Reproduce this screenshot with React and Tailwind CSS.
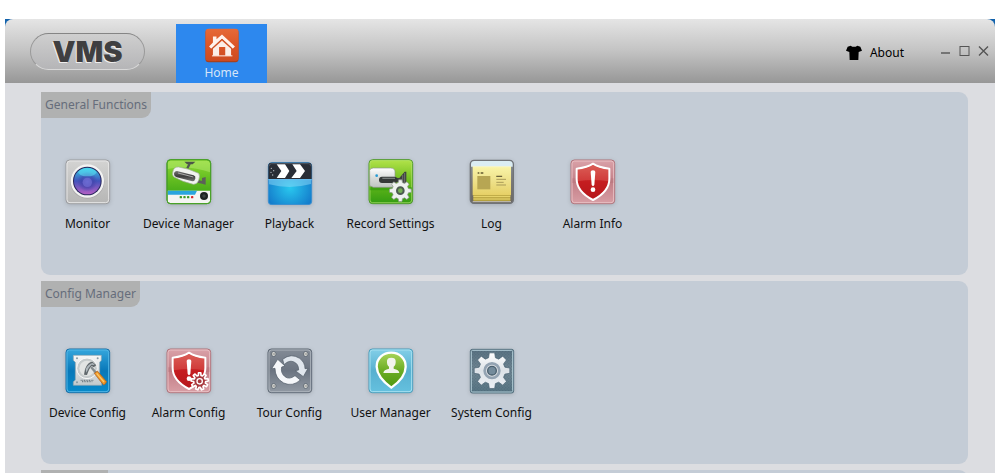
import { useState } from 'react'

// outline of a cog: every tooth is a small trapezoid between the two radii
function gearPath(cx, cy, teeth, outer, inner) {
  const step = (Math.PI * 2) / teeth
  const points = []
  for (let i = 0; i < teeth; i++) {
    const a = i * step - Math.PI / 2
    ;[[-0.33, inner], [-0.19, outer], [0.19, outer], [0.33, inner]].forEach(([k, r]) => {
      points.push(`${(cx + r * Math.cos(a + k * step)).toFixed(1)} ${(cy + r * Math.sin(a + k * step)).toFixed(1)}`)
    })
  }
  return `M${points.join('L')}Z`
}

const SHIELD = 'M69 14C57 23 41 27 20 29V60C20 87 40 108 69 123C98 108 118 87 118 60V29C97 27 81 23 69 14Z'

function Icon({ children }) {
  return (
    <svg viewBox="0 0 138 138" className="w-[46px] h-[46px] drop-shadow-sm" aria-hidden="true">
      {children}
    </svg>
  )
}

function Fade({ id, from, mid, to }) {
  return (
    <linearGradient id={id} x1="0" y1="0" x2="0" y2="1">
      <stop offset="0" stopColor={from} />
      <stop offset="0.5" stopColor={mid} />
      <stop offset="1" stopColor={to} />
    </linearGradient>
  )
}

function MonitorIcon() {
  return (
    <Icon>
      <defs>
        <Fade id="monBox" from="#d4d4d3" mid="#c4c4c3" to="#b6b6b5" />
        <Fade id="monLens" from="#35cfe8" mid="#4353bb" to="#b45fc4" />
        <radialGradient id="monCore">
          <stop offset="0" stopColor="#5b62d0" />
          <stop offset="0.6" stopColor="#4040a8" stopOpacity="0.6" />
          <stop offset="1" stopColor="#4040a8" stopOpacity="0" />
        </radialGradient>
      </defs>
      <rect x="3" y="3" width="131" height="131" rx="11" fill="url(#monBox)" stroke="#9b9c9f" strokeWidth="3" />
      <rect x="6" y="6" width="125" height="125" rx="9" fill="none" stroke="#e6e6e6" strokeWidth="3" />
      <circle cx="67" cy="68" r="51" fill="#aaa9aa" />
      <circle cx="67" cy="66" r="50" fill="#f3f3f2" />
      <circle cx="67" cy="66" r="43" fill="#27265c" />
      <circle cx="67" cy="66" r="40" fill="url(#monLens)" />
      <circle cx="67" cy="68" r="30" fill="url(#monCore)" />
      <circle cx="67" cy="70" r="14" fill="#7671d6" opacity="0.6" />
      <ellipse cx="67" cy="40" rx="27" ry="12" fill="#5de0f2" opacity="0.55" />
    </Icon>
  )
}

function DeviceManagerIcon() {
  return (
    <Icon>
      <defs>
        <Fade id="devBox" from="#8fdb33" mid="#5fba1f" to="#2f9d12" />
        <Fade id="devLens" from="#777" mid="#3c3c3c" to="#777" />
      </defs>
      <rect x="3" y="2" width="131" height="132" rx="11" fill="url(#devBox)" stroke="#3f8a22" strokeWidth="3" />
      <path d="M5 30Q70 18 132 40V12Q130 5 122 5H14Q6 5 5 14Z" fill="#c5f184" opacity="0.4" />
      <path d="M5 95H132V124Q132 132 124 132H13Q5 132 5 124Z" fill="#f4f4f2" />
      <path d="M5 95H93L87 107H5Z" fill="#2aa5de" />
      <path d="M55 8H88L80 16H63Z" fill="#4c5648" />
      <path d="M71 14L64 28" stroke="#505850" strokeWidth="7" />
      <path d="M95 62L108 66V57L119 54V77L108 74L94 71Z" fill="#5c6159" />
      <path d="M38 24Q24 23 21 36Q17 50 24 54Q52 70 82 76Q93 77 98 64Q103 50 98 43Q68 28 38 24Z" fill="#f1f3f0" stroke="#a3ad9c" strokeWidth="2" />
      <path d="M33 36Q24 37 24 45Q24 53 32 55L79 67Q86 67 88 59Q90 52 83 49Z" fill="url(#devLens)" />
      <path d="M36 42L82 54" stroke="#aaa" strokeWidth="3" />
      <circle cx="114" cy="111" r="12" fill="#1e2322" />
      <circle cx="114" cy="111" r="5" fill="#3b4241" />
      <g fill="#3f9c28">
        <rect x="41" y="111" width="7" height="7" rx="2" />
        <rect x="52" y="111" width="7" height="7" rx="2" />
        <rect x="63" y="111" width="7" height="7" rx="2" />
      </g>
      <rect x="75" y="111" width="7" height="7" rx="2" fill="#d5282a" />
      <rect x="3" y="2" width="131" height="132" rx="11" fill="none" stroke="#4ba52a" strokeWidth="3" />
    </Icon>
  )
}

function PlaybackIcon() {
  return (
    <Icon>
      <defs>
        <radialGradient id="playBlue" cx="0.5" cy="0.6" r="0.6">
          <stop offset="0" stopColor="#29c7ee" />
          <stop offset="1" stopColor="#1379ca" />
        </radialGradient>
      </defs>
      <rect x="4" y="11" width="130" height="126" rx="10" fill="url(#playBlue)" stroke="#3b8fd0" strokeWidth="3" />
      <path d="M4 60V20Q4 11 13 11H125Q134 11 134 20V60Z" fill="#292d36" />
      <path d="M6 60H132V75Q70 92 6 76Z" fill="#8fd9f8" opacity="0.5" />
      <path d="M4 62H134" stroke="#6abcf0" strokeWidth="3" />
      <path d="M29 16H54L67 36L54 57H29L43 36Z" fill="#fff" />
      <path d="M76 16H99L114 36L99 57H73L89 36Z" fill="#fff" />
      <g fill="#b9bec6">
        <circle cx="13" cy="28" r="2" />
        <circle cx="20" cy="35" r="2" />
        <circle cx="12" cy="40" r="2" />
        <circle cx="17" cy="48" r="2" />
      </g>
      <path d="M6 22Q7 14 14 14H124Q132 14 132 22" fill="none" stroke="#626a77" strokeWidth="2" />
    </Icon>
  )
}

function RecordIcon() {
  return (
    <Icon>
      <defs>
        <Fade id="recBox" from="#b3e34a" mid="#6abb1b" to="#329b12" />
        <Fade id="recCam" from="#fff" mid="#d9dcda" to="#bfc4c2" />
      </defs>
      <rect x="3" y="2" width="131" height="132" rx="11" fill="url(#recBox)" stroke="#4f9a2a" strokeWidth="3" />
      <rect x="6" y="5" width="125" height="126" rx="8" fill="none" stroke="#b2e26f" strokeWidth="2" />
      <path d="M5 94H132V85H5Z" fill="#249209" opacity="0.5" />
      <path d="M80 56L94 57L110 38H115V78H107L94 70H80Z" fill="#3d413e" />
      <path d="M110 42V76M104 48V71" stroke="#868b87" strokeWidth="2" />
      <path d="M5 34Q7 27 16 27H68Q81 28 81 38V75Q80 85 70 85H16L5 80Z" fill="url(#recCam)" stroke="#8b948b" strokeWidth="2" />
      <rect x="33" y="53" width="55" height="19" rx="9" fill="#343838" />
      <path d="M43 58H81" stroke="#777d7b" strokeWidth="4" />
      <circle cx="26" cy="50" r="4" fill="#289bd4" />
      <path d={gearPath(97, 95, 8, 33, 25)} fill="#eef1ef" stroke="#899489" strokeWidth="2" strokeLinejoin="round" />
      <circle cx="97" cy="95" r="10" fill="#74ae55" stroke="#4c5b50" strokeWidth="6" />
    </Icon>
  )
}

function LogIcon() {
  return (
    <Icon>
      <defs>
        <Fade id="logPaper" from="#f9f4a7" mid="#eee18a" to="#e6d065" />
        <Fade id="logBox" from="#8a959b" mid="#7a7876" to="#6b6761" />
      </defs>
      <rect x="4" y="4" width="129" height="129" rx="11" fill="url(#logBox)" stroke="#707378" strokeWidth="4" />
      <path d="M6 23V15Q7 6 16 6H121Q130 6 131 15V23Z" fill="#dbedf3" />
      <path d="M13 32V126H124V32" fill="#b5a13e" />
      <path d="M13 113H124M13 120H124" stroke="#f0dd75" strokeWidth="3" />
      <path d="M11 23H126V109H11Z" fill="url(#logPaper)" />
      <path d="M11 23H126" stroke="#f9f7cc" strokeWidth="3" />
      <path d="M11 128H126" stroke="#c9c4b7" strokeWidth="3" />
      <rect x="25" y="51" width="39" height="40" fill="#b7a653" />
      <path d="M26 42H31M35 42H43" stroke="#625a30" strokeWidth="5" />
      <path d="M82 52H100M82 61H111M82 70H104M82 78H111" stroke="#a99b58" strokeWidth="3" />
      <path d="M82 52H99" stroke="#5a5535" strokeWidth="3" />
    </Icon>
  )
}

function ShieldBase({ id }) {
  return (
    <>
      <defs>
        <Fade id={`${id}Box`} from="#daa2a9" mid="#c27e86" to="#d89ea5" />
        <Fade id={`${id}Red`} from="#d5524c" mid="#c51d20" to="#b6161b" />
      </defs>
      <rect x="3" y="3" width="131" height="131" rx="10" fill={`url(#${id}Box)`} stroke="#ae7179" strokeWidth="3" />
      <rect x="6" y="6" width="125" height="125" rx="8" fill="none" stroke="#e8bfc3" strokeWidth="3" />
      <path d="M6 72H131V58H6Z" fill="#b16d75" opacity="0.3" />
      <path d={SHIELD} fill={`url(#${id}Red)`} stroke="#fff" strokeWidth="6" strokeLinejoin="round" />
      <path d="M24 67Q70 59 114 67V32Q88 30 69 19Q50 30 24 32Z" fill="#ef8b80" opacity="0.25" />
      <path d="M62 39Q62 34 69 34Q76 34 76 39L73 78Q69 85 65 78Z" fill="#fff" />
      <circle cx="69" cy="92" r="7" fill="#fff" />
    </>
  )
}

function AlarmInfoIcon() {
  return (
    <Icon>
      <ShieldBase id="alarmInfo" />
    </Icon>
  )
}

function AlarmConfigIcon() {
  return (
    <Icon>
      <ShieldBase id="alarmCfg" />
      <path d={gearPath(101, 100, 9, 26, 18)} fill="#a8393e" stroke="#fff" strokeWidth="5" strokeLinejoin="round" />
      <circle cx="101" cy="100" r="8" fill="#a8393e" stroke="#fff" strokeWidth="4" />
    </Icon>
  )
}

function DeviceConfigIcon() {
  return (
    <Icon>
      <defs>
        <Fade id="dcBox" from="#36a7dd" mid="#0878b9" to="#078aca" />
        <Fade id="dcDisk" from="#f6f7f7" mid="#dadddf" to="#c2c9cc" />
      </defs>
      <rect x="3" y="3" width="131" height="131" rx="10" fill="url(#dcBox)" stroke="#176ca5" strokeWidth="3" />
      <rect x="6" y="6" width="125" height="125" rx="8" fill="none" stroke="#52b6e5" strokeWidth="3" />
      <path d="M25 22H109V37L104 43V96L110 101V112H25V101L31 96V43L25 37Z" fill="url(#dcDisk)" stroke="#8ea4af" strokeWidth="2" />
      <circle cx="66" cy="61" r="31" fill="#c6cbcc" stroke="#f9f9f9" strokeWidth="3" />
      <circle cx="66" cy="61" r="23" fill="#e2e4e3" />
      <path d="M47 97H86M51 101H82" stroke="#758087" strokeWidth="4" strokeDasharray="3 2" />
      <path d="M60 64Q68 41 82 41L94 52L86 58L80 54Q73 60 66 81L57 80Z" fill="#60676b" />
      <path d="M62 63Q71 46 84 45L89 51L79 50Q70 58 64 74Z" fill="#aeb7bc" />
      <path d="M78 57L96 78" stroke="#848c8f" strokeWidth="7" />
      <path d="M88 76L97 69L124 100Q125 107 116 111Q111 106 88 76Z" fill="#eb9327" stroke="#a95a15" strokeWidth="2" />
      <path d="M95 76L117 102" stroke="#ffcb65" strokeWidth="4" />
      <g fill="#8799a3">
        <circle cx="36" cy="31" r="3" />
        <circle cx="98" cy="31" r="3" />
        <circle cx="36" cy="103" r="3" />
      </g>
    </Icon>
  )
}

function TourIcon() {
  return (
    <Icon>
      <defs>
        <Fade id="tourBox" from="#838b96" mid="#6b7481" to="#929aa4" />
      </defs>
      <rect x="3" y="3" width="131" height="131" rx="10" fill="url(#tourBox)" stroke="#5c6773" strokeWidth="3" />
      <rect x="6" y="6" width="125" height="125" rx="8" fill="none" stroke="#adb4bc" strokeWidth="3" />
      {[[20, 18], [116, 18], [20, 114], [116, 114]].map(([x, y]) => (
        <g key={`${x}-${y}`}>
          <circle cx={x} cy={y} r="7" fill="#e5e5e1" stroke="#4d5862" strokeWidth="2" />
          <path d={`M${x - 4} ${y}H${x + 4}`} stroke="#7b7d7b" strokeWidth="3" />
        </g>
      ))}
      <g stroke="#4e5965" strokeWidth="2" strokeLinejoin="round">
        <path d="M47 34Q72 14 98 31Q114 43 114 62L123 61L109 86L85 68L95 66Q95 47 79 41Q65 36 51 50Z" fill="#e0e6ed" />
        <path d="M14 62L32 34L54 54L44 57Q40 75 54 86Q67 96 84 83L100 96Q77 117 50 105Q24 91 24 61Z" fill="#f5f7fa" />
      </g>
    </Icon>
  )
}

function UserIcon() {
  return (
    <Icon>
      <defs>
        <Fade id="userBox" from="#83cfe8" mid="#58b0d0" to="#65c1df" />
        <Fade id="userPin" from="#a9d55b" mid="#6cad26" to="#4e9710" />
      </defs>
      <rect x="3" y="3" width="131" height="131" rx="10" fill="url(#userBox)" stroke="#479bba" strokeWidth="3" />
      <rect x="6" y="6" width="125" height="125" rx="8" fill="none" stroke="#a6e0f0" strokeWidth="3" />
      <path d="M70 14C44 14 26 32 26 56C27 83 49 104 70 119C91 104 113 82 113 56C113 32 95 14 70 14Z" fill="url(#userPin)" stroke="#fff" strokeWidth="7" />
      <path d="M57 39Q57 29 70 29Q83 29 83 39Q84 51 77 56V62Q93 65 94 75H46Q47 65 63 62V56Q56 51 57 39Z" fill="#f2f4ed" />
    </Icon>
  )
}

function SystemIcon() {
  return (
    <Icon>
      <defs>
        <Fade id="sysBox" from="#587181" mid="#718793" to="#557382" />
        <Fade id="sysGear" from="#fff" mid="#dce2e7" to="#edf1f6" />
        <pattern id="sysDots" width="9" height="9" patternUnits="userSpaceOnUse">
          <path d="M0 2H4M5 6H9" stroke="#3e5b6b" strokeWidth="2" />
        </pattern>
      </defs>
      <rect x="4" y="4" width="130" height="131" rx="6" fill="url(#sysBox)" stroke="#55707f" strokeWidth="3" />
      <rect x="9" y="9" width="120" height="121" fill="url(#sysDots)" opacity="0.5" />
      <rect x="7" y="7" width="124" height="125" rx="4" fill="none" stroke="#b0cbd5" strokeWidth="3" />
      <path d={gearPath(69, 68, 8, 54, 40)} fill="url(#sysGear)" stroke="#465f70" strokeWidth="2" strokeLinejoin="round" />
      <circle cx="69" cy="68" r="22" fill="#d8dde2" stroke="#93a3b2" strokeWidth="8" />
      <circle cx="69" cy="68" r="13" fill="#748b9b" stroke="#4a606f" strokeWidth="4" />
    </Icon>
  )
}

function HomeIcon() {
  return (
    <svg viewBox="0 0 108 108" className="w-9 h-9" aria-hidden="true">
      <defs>
        <Fade id="homeBox" from="#e66a38" mid="#dc5627" to="#cc4a20" />
      </defs>
      <rect x="3" y="4" width="102" height="102" rx="10" fill="#a7411f" />
      <rect x="3" y="2" width="102" height="100" rx="10" fill="url(#homeBox)" />
      <path d="M26 45V26H37V35L54 20L94 57L87 64L54 33L21 64L14 57Z" fill="#fff3ed" />
      <path d="M26 64L54 39L82 64V86H64V59H45V86H26Z" fill="#fbeee8" />
      <path d="M21 65L54 34L87 65" fill="none" stroke="#b7431a" strokeWidth="2" />
      <path d="M23 86H86" stroke="#fff3ed" strokeWidth="3" />
    </svg>
  )
}

const PANELS = [
  {
    title: 'General Functions',
    items: [
      { label: 'Monitor', icon: MonitorIcon },
      { label: 'Device Manager', icon: DeviceManagerIcon },
      { label: 'Playback', icon: PlaybackIcon },
      { label: 'Record Settings', icon: RecordIcon },
      { label: 'Log', icon: LogIcon },
      { label: 'Alarm Info', icon: AlarmInfoIcon },
    ],
  },
  {
    title: 'Config Manager',
    items: [
      { label: 'Device Config', icon: DeviceConfigIcon },
      { label: 'Alarm Config', icon: AlarmConfigIcon },
      { label: 'Tour Config', icon: TourIcon },
      { label: 'User Manager', icon: UserIcon },
      { label: 'System Config', icon: SystemIcon },
    ],
  },
]

function Header() {
  return (
    <div className="bg-[#1262ac]">
      <header className="flex items-center h-16 pl-[25px] pr-[6px] rounded-t-lg bg-linear-to-b from-[#e5e5e5] via-[#c3c3c3] to-[#979797]">
        <div className="flex items-center justify-center w-[115px] h-[37px] rounded-full border border-t-[#858585] border-x-[#999] border-b-[#d8d8d8] bg-linear-to-b from-[#cfcfcf] to-[#b5b5b7] font-['Inter',sans-serif] font-black text-[29px] leading-none text-[#3f3f41] [text-shadow:-1px_1px_0_#eee]">
          VMS
        </div>
        <nav className="self-end ml-[31px]">
          <a href="#home" className="flex flex-col items-center w-[91px] h-[59px] pt-1 bg-[#2d88ee] text-[#d5e5f8]">
            <HomeIcon />
            <span className="leading-5">Home</span>
          </a>
        </nav>
        <div className="flex items-center ml-auto text-black">
          <div className="flex items-center gap-2 pt-1 mr-9">
            <button aria-label="Skin">
              <svg viewBox="0 0 48 48" className="w-4 h-4" aria-hidden="true">
                <path d="M14 2Q24 9 34 2L43 5L48 17L38 21L37 45H11L10 21L0 17L5 5Z" fill="#000" />
              </svg>
            </button>
            <button>About</button>
          </div>
          <div className="flex items-center gap-2 text-[#555]">
            <button aria-label="Minimize">
              <svg viewBox="0 0 11 12" className="w-[11px] h-3">
                <path d="M1 8H10" stroke="currentColor" strokeWidth="1.4" />
              </svg>
            </button>
            <button aria-label="Maximize">
              <svg viewBox="0 0 11 12" className="w-[11px] h-3">
                <rect x="1" y="1.5" width="9" height="9" fill="none" stroke="currentColor" />
              </svg>
            </button>
            <button aria-label="Close">
              <svg viewBox="0 0 11 12" className="w-[11px] h-3">
                <path d="M1 1.5L10 10.5M10 1.5L1 10.5" stroke="currentColor" strokeWidth="1.4" />
              </svg>
            </button>
          </div>
        </div>
      </header>
    </div>
  )
}

function Panel({ title, items, selected, onSelect }) {
  return (
    <section className="h-[183px] shrink-0 rounded-r-[9px] rounded-bl-[9px] bg-[#c4ccd6]">
      <h2 className="w-fit h-[26px] px-1 leading-[26px] rounded-br-[9px] bg-[#b0b1b1] text-[#666d7b]">{title}</h2>
      <ul className="flex gap-2 mt-[41px]">
        {items.map(item => (
          <li key={item.label} className="w-[93px]">
            <button
              onClick={() => onSelect(item.label)}
              aria-pressed={selected === item.label}
              className="flex flex-col items-center gap-[11px] w-full whitespace-nowrap leading-4 text-[#111]"
            >
              <item.icon />
              {item.label}
            </button>
          </li>
        ))}
      </ul>
    </section>
  )
}

export default function App() {
  const [selected, setSelected] = useState(null)

  return (
    <div className="h-screen overflow-hidden bg-white pt-[19px] px-[5px] font-['Noto_Sans',sans-serif] text-[12px]">
      <Header />
      <main className="flex flex-col gap-[6px] min-h-full pt-[9px] pl-9 pr-[27px] bg-[#dcdde1]">
        {PANELS.map(p => (
          <Panel key={p.title} {...p} selected={selected} onSelect={setSelected} />
        ))}
        {/* next group, only its top edge is in view */}
        <section className="h-[183px] shrink-0 rounded-r-[9px] rounded-bl-[9px] bg-[#c4ccd6]">
          <div className="w-[67px] h-[26px] rounded-br-[9px] bg-[#b0b1b1]" />
        </section>
      </main>
    </div>
  )
}
